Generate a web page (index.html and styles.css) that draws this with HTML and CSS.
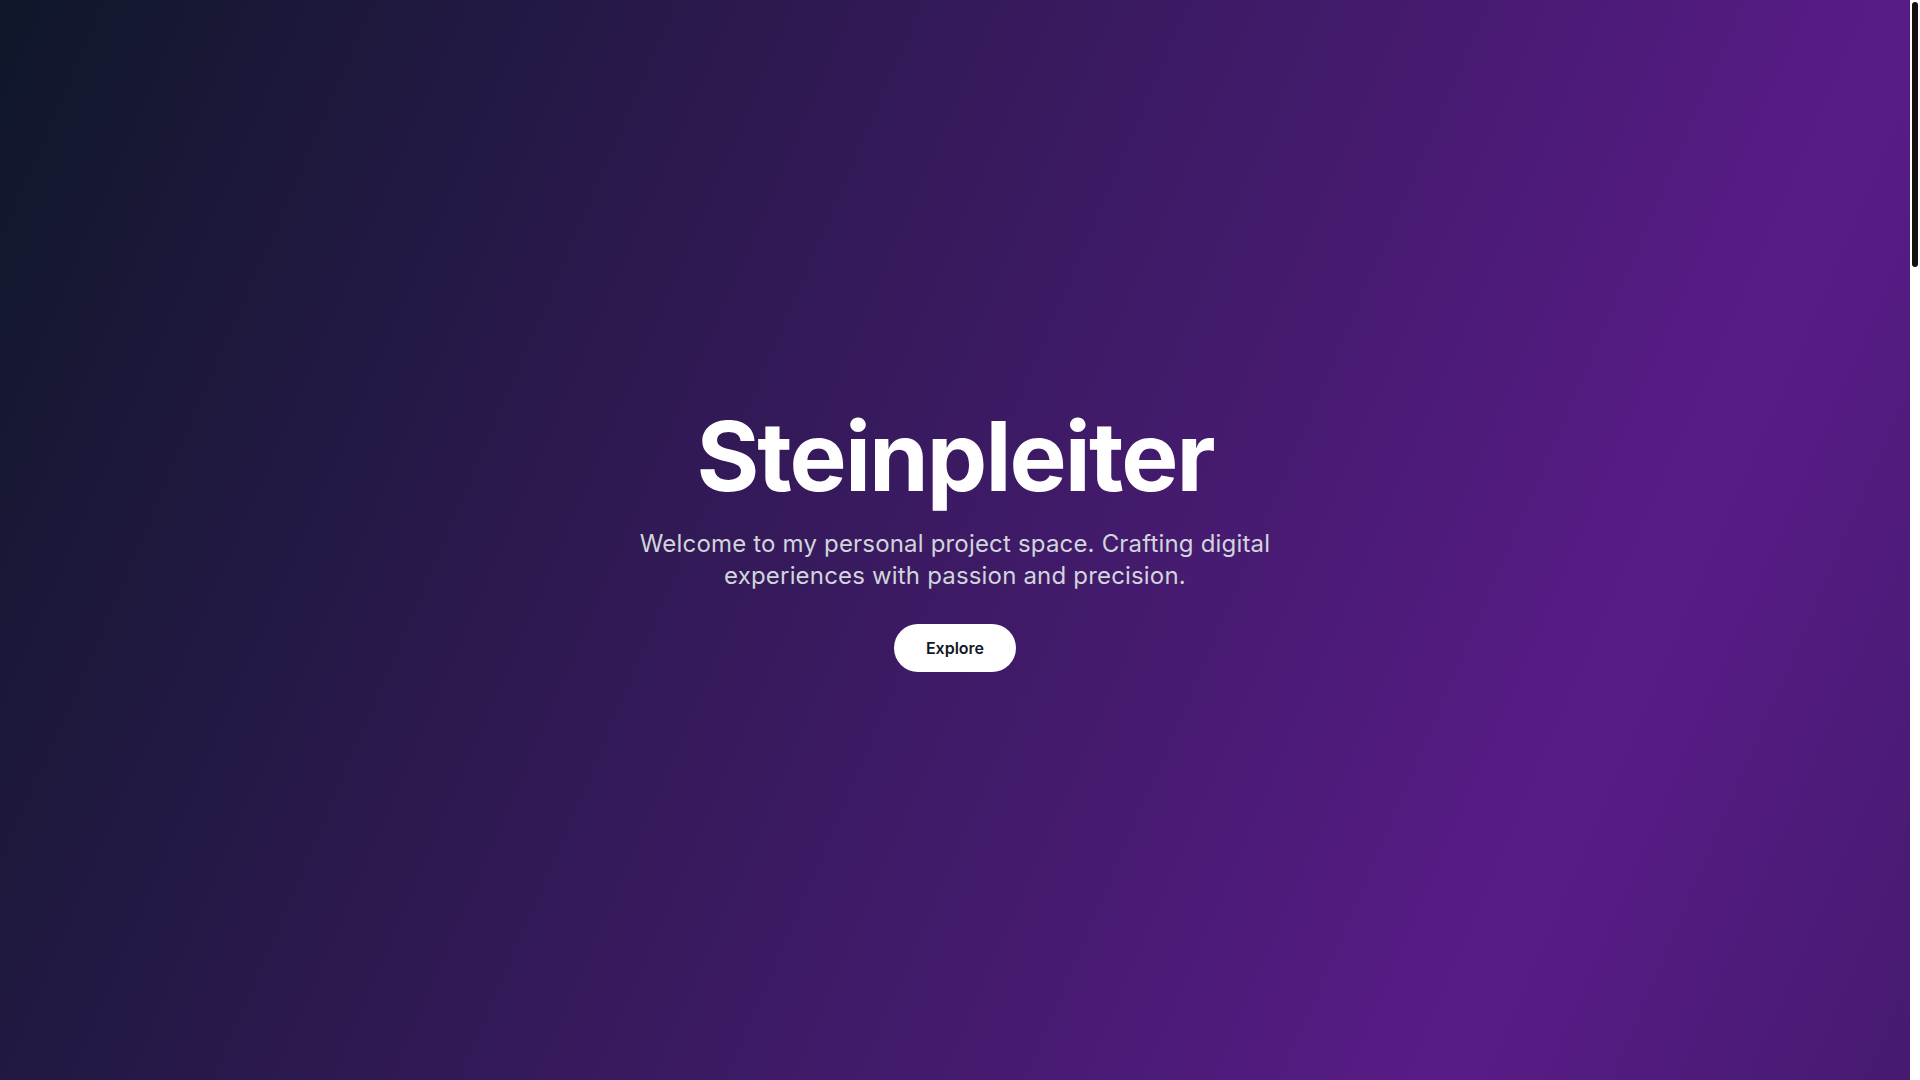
FILE: index.html
```html
<!DOCTYPE html>
<html lang="en">
<head>
<meta charset="utf-8">
<title>Steinpleiter</title>
<link rel="stylesheet" href="styles.css">
</head>
<body>
<div class="window">
  <main class="page">
    <section class="hero">
      <div class="hero-inner">
        <h1 class="title">Steinpleiter</h1>
        <p class="subtitle">Welcome to my personal project space. Crafting digital experiences with passion and precision.</p>
        <a class="btn" href="#projects">Explore</a>
      </div>
    </section>
  </main>
  <div class="scrollbar" aria-hidden="true">
    <div class="scroll-thumb"></div>
  </div>
</div>
</body>
</html>
```

FILE: styles.css
```css
html, body {
  margin: 0;
  padding: 0;
  height: 100%;
  overflow: hidden;
}
body {
  font-family: "Inter", "Noto Sans", sans-serif;
  color: #fff;
  background: #0f172a;
}
.window {
  display: flex;
  height: 100vh;
}
.page {
  flex: 1;
  display: flex;
  flex-direction: column;
  background-image: linear-gradient(to bottom right, #0f172a, #581c87, #0f172a);
  background-size: 100% 4436px;
  background-repeat: no-repeat;
}
.hero {
  flex: 1;
  display: flex;
  align-items: center;
  justify-content: center;
}
.hero-inner {
  display: flex;
  flex-direction: column;
  align-items: center;
  text-align: center;
}
.title {
  margin: 0 0 24px;
  font-size: 96px;
  line-height: 1;
  font-weight: 700;
  letter-spacing: -0.02em;
  color: #fff;
}
.subtitle {
  margin: 0 0 32px;
  max-width: 672px;
  font-size: 24px;
  line-height: 32px;
  letter-spacing: 0.18px;
  color: #d1d5db;
}
.btn {
  display: inline-block;
  padding: 12px 32px;
  border-radius: 9999px;
  background: #fff;
  color: #111827;
  font-size: 16px;
  line-height: 24px;
  font-weight: 600;
  text-decoration: none;
}
.scrollbar {
  width: 10px;
  background: #fff;
  padding: 2px;
  box-sizing: border-box;
}
.scroll-thumb {
  width: 6px;
  height: 265px;
  border-radius: 3px;
  background: #111;
}
```
